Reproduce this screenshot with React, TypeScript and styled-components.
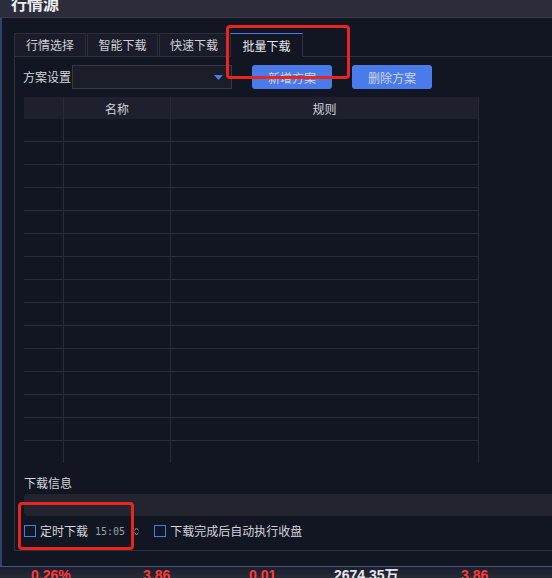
import React from "react";
import styled, { createGlobalStyle } from "styled-components";

const GlobalStyle = createGlobalStyle`
  html, body { margin: 0; padding: 0; background: #121522; }
  body {
    width: 552px; height: 578px; overflow: hidden;
    font-family: "Noto Sans CJK SC", "Noto Sans", sans-serif;
    font-size: 12px; color: #d4d6dc;
  }
  * { box-sizing: border-box; }
`;

const Screen = styled.div`
  position: relative;
  width: 552px;
  height: 578px;
  display: flex;
  flex-direction: column;
  overflow: hidden;
  background: #121522;
`;

const Window = styled.div`
  display: flex;
  flex-direction: column;
  flex: none;
  height: 567px;
  border-bottom: 1px solid #485578;
`;

const TitleBar = styled.div`
  height: 18px;
  flex: none;
  background: #2b2e3a;
  border-bottom: 1px solid #3a3d49;
  overflow: hidden;
  padding-left: 11px;
`;

const Title = styled.div`
  margin-top: -7px;
  font-size: 16px;
  line-height: 20px;
  font-weight: bold;
  color: #eceef2;
`;

const Body = styled.div`
  flex: 1;
  display: flex;
  flex-direction: column;
  border-left: 2px solid #34416b;
  padding: 15px 0 15px 12px;
`;

const TabBar = styled.div`
  display: flex;
  gap: 1px;
  height: 24px;
  flex: none;
  border-bottom: 1px solid #2e313c;
`;

const Tab = styled.div<{ $w: number; $active?: boolean }>`
  width: ${(p) => p.$w}px;
  height: ${(p) => (p.$active ? 24 : 23)}px;
  margin-bottom: ${(p) => (p.$active ? -1 : 0)}px;
  border: 1px solid #2e313c;
  border-bottom: none;
  border-top-color: ${(p) => (p.$active ? "#4a7be8" : "#2e313c")};
  background: ${(p) => (p.$active ? "#121522" : "#1a1d29")};
  color: ${(p) => (p.$active ? "#e6e8ec" : "#d0d2d8")};
  display: flex;
  align-items: center;
  justify-content: center;
  padding-bottom: 1px;
`;

const Panel = styled.div`
  flex: 1;
  display: flex;
  flex-direction: column;
  border-left: 1px solid #2e313c;
  border-bottom: 1px solid #2e313c;
  padding: 8px 0 0 8px;
`;

const Toolbar = styled.div`
  display: flex;
  align-items: center;
  height: 24px;
`;

const Label = styled.span`
  line-height: 16px;
  color: #d4d6dc;
`;

const Select = styled.div`
  margin-left: 1px;
  width: 160px;
  height: 24px;
  background: #1b1e29;
  border: 1px solid #363946;
  display: flex;
  align-items: center;
  justify-content: flex-end;
  padding-right: 8px;
`;

const Button = styled.div`
  margin-left: 20px;
  width: 80px;
  height: 24px;
  border-radius: 3px;
  background: #4a7bea;
  color: #cfd5e3;
  display: flex;
  align-items: center;
  justify-content: center;
`;

const Table = styled.div`
  margin: 8px 0 0 1px;
  width: 455px;
  display: flex;
  flex-direction: column;
`;

const Row = styled.div<{ $header?: boolean; $last?: boolean }>`
  display: grid;
  grid-template-columns: 40px 107px 308px;
  height: ${(p) => (p.$header || p.$last ? 22 : 23)}px;
  background: ${(p) => (p.$header ? "#1e212d" : "transparent")};
  border-bottom: ${(p) => (p.$header || p.$last ? "none" : "1px solid #292c37")};
`;

const Cell = styled.div`
  border-right: 1px solid #292c37;
  display: flex;
  align-items: center;
  justify-content: center;
  color: #d0d3da;
`;

const SectionLabel = styled.div`
  margin: 12px 0 0 1px;
  line-height: 16px;
`;

const InfoBar = styled.div`
  margin: 3px 0 0 1px;
  height: 22px;
  background: #22252f;
  border-radius: 4px 0 0 4px;
`;

const CheckRow = styled.div`
  margin: 7px 0 0 1px;
  height: 16px;
  display: flex;
  align-items: center;
`;

const Check = styled.span<{ $gap?: number }>`
  width: 12px;
  height: 12px;
  border: 1px solid #4a7be8;
  margin-left: ${(p) => p.$gap ?? 0}px;
  flex: none;
`;

const CheckText = styled.span`
  margin-left: 4px;
  line-height: 16px;
`;

const Time = styled.span`
  margin-left: 7px;
  font-family: "DejaVu Sans Mono", "Liberation Mono", monospace;
  font-size: 10px;
  color: #9ea1a9;
`;

const Spin = styled.svg`
  margin-left: 9px;
  flex: none;
`;

const StatStrip = styled.div`
  flex: none;
  height: 11px;
  overflow: hidden;
  display: flex;
  padding-left: 31px;
  background: linear-gradient(#1a1d2a, #272b38);
  font-size: 14px;
  line-height: 16px;
  font-weight: bold;
`;

const Stat = styled.span<{ $w: number; $white?: boolean }>`
  width: ${(p) => p.$w}px;
  flex: none;
  color: ${(p) => (p.$white ? "#e4e6ea" : "#ff3a3a")};
  font-family: "Liberation Sans", "Noto Sans CJK SC", sans-serif;
`;

const Mark = styled.div<{ $x: number; $y: number; $w: number; $h: number }>`
  position: absolute;
  left: ${(p) => p.$x}px;
  top: ${(p) => p.$y}px;
  width: ${(p) => p.$w}px;
  height: ${(p) => p.$h}px;
  border: 3px solid #e8251f;
  border-radius: 4px;
  pointer-events: none;
`;

const tabs = [
  { t: "行情选择", w: 72 },
  { t: "智能下载", w: 71 },
  { t: "快速下载", w: 70 },
  { t: "批量下载", w: 73, active: true },
];

export default function App() {
  const rows = Array.from({ length: 15 });
  return (
    <Screen>
      <GlobalStyle />
      <Window>
        <TitleBar>
          <Title>行情源</Title>
        </TitleBar>
        <Body>
          <TabBar>
            {tabs.map((tab) => (
              <Tab key={tab.t} $w={tab.w} $active={tab.active}>
                {tab.t}
              </Tab>
            ))}
          </TabBar>
          <Panel>
            <Toolbar>
              <Label>方案设置</Label>
              <Select>
                <svg width="9" height="5" viewBox="0 0 9 5">
                  <path d="M0 0 H9 L4.5 5 Z" fill="#4a7be8" />
                </svg>
              </Select>
              <Button>新增方案</Button>
              <Button>删除方案</Button>
            </Toolbar>
            <Table>
              <Row $header>
                <Cell />
                <Cell>名称</Cell>
                <Cell>规则</Cell>
              </Row>
              {rows.map((_, i) => (
                <Row key={i} $last={i === rows.length - 1}>
                  <Cell />
                  <Cell />
                  <Cell />
                </Row>
              ))}
            </Table>
            <SectionLabel>下载信息</SectionLabel>
            <InfoBar />
            <CheckRow>
              <Check />
              <CheckText>定时下载</CheckText>
              <Time>15:05</Time>
              <Spin width="5" height="9" viewBox="0 0 5 9">
                <path d="M0.5 3.5 L2.5 1 L4.5 3.5 M0.5 5.5 L2.5 8 L4.5 5.5" stroke="#8a8d96" fill="none" strokeWidth="1" />
              </Spin>
              <Check $gap={15} />
              <CheckText>下载完成后自动执行收盘</CheckText>
            </CheckRow>
          </Panel>
        </Body>
      </Window>
      <StatStrip>
        <Stat $w={112}>0.26%</Stat>
        <Stat $w={106}>3.86</Stat>
        <Stat $w={85}>0.01</Stat>
        <Stat $w={127} $white>2674.35万</Stat>
        <Stat $w={60}>3.86</Stat>
      </StatStrip>
      <Mark $x={226} $y={25} $w={124} $h={54} />
      <Mark $x={18} $y={502} $w={116} $h={48} />
    </Screen>
  );
}
